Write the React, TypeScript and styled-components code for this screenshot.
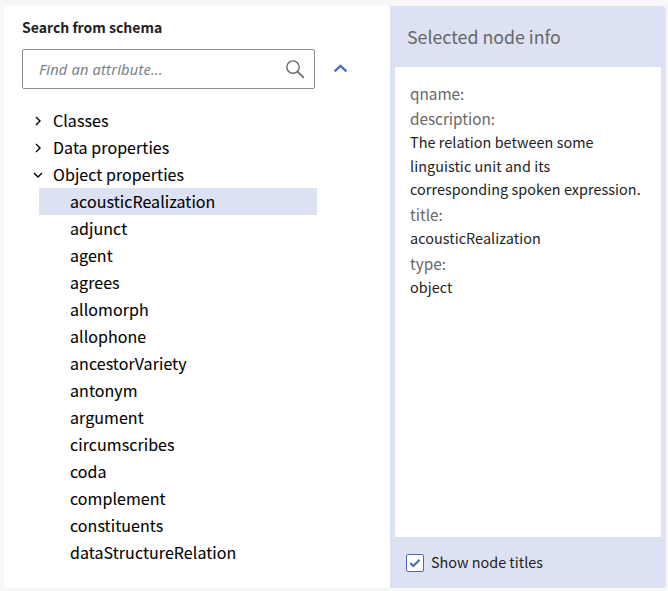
import React, { useState } from "react";
import styled, { createGlobalStyle } from "styled-components";

const Global = createGlobalStyle`
  * { box-sizing: border-box; }
  body {
    margin: 0;
    background: #f7f7f7;
    font-family: "Noto Sans CJK JP", "Noto Sans", sans-serif;
    color: #222;
  }
`;

const Page = styled.main`
  height: 591px;
  padding: 6px 2px 3px 4px;
  overflow: hidden;
`;

const Card = styled.section`
  display: flex;
  height: 582px;
  background: #fff;
  border-radius: 4px;
  overflow: hidden;
`;

const SearchPanel = styled.div`
  flex: 0 0 386px;
  padding: 10px 0 0 18px;
`;

const Label = styled.label`
  display: block;
  height: 33px;
  line-height: 22px;
  font-size: 14px;
  font-weight: 600;
  color: #222;
`;

const SearchRow = styled.div`
  display: flex;
  align-items: center;
  gap: 18px;
`;

const SearchBox = styled.div`
  display: flex;
  align-items: center;
  width: 293px;
  height: 40px;
  padding: 0 9px 0 16px;
  border: 1px solid #878d93;
  border-radius: 2px;
  color: #63686d;
`;

const SearchInput = styled.input`
  flex: 1;
  min-width: 0;
  height: 36px;
  padding: 0;
  border: 0;
  outline: 0;
  background: transparent;
  font: italic 14.6px "Noto Sans", sans-serif;
  letter-spacing: 0.2px;
  &::placeholder {
    color: #7c8187;
    opacity: 1;
  }
`;

const CollapseButton = styled.button`
  display: flex;
  padding: 0;
  border: 0;
  background: none;
  color: #4a6fcd;
`;

const Tree = styled.ul`
  margin: 18px 0 0 17px;
  padding: 0;
  width: 278px;
  list-style: none;
`;

const TreeRow = styled.li<{ $depth: number; $selected?: boolean }>`
  display: flex;
  align-items: center;
  height: 27px;
  padding-left: ${(p) => (p.$depth ? 31 : 0)}px;
  background: ${(p) => (p.$selected ? "#dde2f3" : "transparent")};
  color: #000;
  font-size: 16px;
  letter-spacing: 0.06px;
  line-height: 27px;
  white-space: nowrap;
  -webkit-text-stroke: 0.08px #000;
`;

const Toggle = styled.svg`
  flex: none;
  width: 10px;
  height: 10px;
  margin: 0 10px 0 -6px;
`;

const InfoPanel = styled.aside`
  display: flex;
  flex-direction: column;
  flex: 1;
  padding: 0 5px;
  background: #dde2f3;
`;

const InfoTitle = styled.h2`
  margin: 0;
  height: 61px;
  padding-left: 12px;
  font-size: 17.75px;
  font-weight: 400;
  line-height: 61px;
  color: #676767;
`;

const InfoBody = styled.dl`
  height: 470px;
  margin: 0;
  padding: 14px 10px 0 15px;
  background: #fff;
`;

const Term = styled.dt`
  height: 25px;
  line-height: 25px;
  font-size: 15.3px;
  color: #676767;
`;

const Detail = styled.dd`
  margin: -1px 0 1.6px;
  font-size: 14.4px;
  letter-spacing: 0.05px;
  line-height: 23.5px;
  white-space: pre-line;
  color: #222;
`;

const InfoFooter = styled.label`
  display: flex;
  align-items: center;
  height: 51px;
  padding-left: 11px;
  gap: 7px;
  font-size: 14.4px;
  color: #222;
`;

const FooterText = styled.span`
  line-height: 20px;
  padding-bottom: 1px;
`;

const HiddenCheckbox = styled.input`
  position: absolute;
  opacity: 0;
  pointer-events: none;
`;

const CheckMark = styled.span`
  display: flex;
  align-items: center;
  justify-content: center;
  width: 18px;
  height: 18px;
  border: 1px solid #4a67b8;
  border-radius: 2px;
  background: #fff;
`;

const groups = [
  { title: "Classes", open: false, items: [] as string[] },
  { title: "Data properties", open: false, items: [] as string[] },
  {
    title: "Object properties",
    open: true,
    items: [
      "acousticRealization", "adjunct", "agent", "agrees", "allomorph",
      "allophone", "ancestorVariety", "antonym", "argument",
      "circumscribes", "coda", "complement", "constituents",
      "dataStructureRelation",
    ],
  },
];

const details = [
  { term: "qname:", value: "" },
  {
    term: "description:",
    value: "The relation between some\nlinguistic unit and its\ncorresponding spoken expression.",
  },
  { term: "title:", value: "acousticRealization" },
  { term: "type:", value: "object" },
];

export default function App() {
  const [selected, setSelected] = useState("acousticRealization");
  const [showTitles, setShowTitles] = useState(true);

  return (
    <>
      <Global />
      <Page>
        <Card>
          <SearchPanel>
            <Label htmlFor="attribute">Search from schema</Label>
            <SearchRow>
              <SearchBox>
                <SearchInput id="attribute" placeholder="Find an attribute..." />
                <svg width="19" height="19" viewBox="0 0 19 19" fill="none" stroke="currentColor" strokeLinecap="round">
                  <circle cx="7" cy="7.1" r="6.2" strokeWidth="1.4" />
                  <path d="M11.5 11.6 17.4 17.4" strokeWidth="1.6" />
                </svg>
              </SearchBox>
              <CollapseButton aria-label="Collapse">
                <svg width="15" height="10" viewBox="0 0 15 10" fill="none" stroke="currentColor" strokeWidth="2.5">
                  <path d="M1.6 7.3 7.5 1.9 13.4 7.3" />
                </svg>
              </CollapseButton>
            </SearchRow>
            <Tree>
              {groups.map((group) => (
                <React.Fragment key={group.title}>
                  <TreeRow $depth={0}>
                    <Toggle viewBox="0 0 10 10" fill="none" stroke="currentColor" strokeWidth="1.4">
                      <path d={group.open ? "M1 3.1 5 7.1 9 3.1" : "M3 1 7 5 3 9"} />
                    </Toggle>
                    {group.title}
                  </TreeRow>
                  {group.items.map((item) => (
                    <TreeRow key={item} $depth={1} $selected={item === selected} onClick={() => setSelected(item)}>
                      {item}
                    </TreeRow>
                  ))}
                </React.Fragment>
              ))}
            </Tree>
          </SearchPanel>
          <InfoPanel>
            <InfoTitle>Selected node info</InfoTitle>
            <InfoBody>
              {details.map(({ term, value }) => (
                <React.Fragment key={term}>
                  <Term>{term}</Term>
                  {value && <Detail>{value}</Detail>}
                </React.Fragment>
              ))}
            </InfoBody>
            <InfoFooter>
              <HiddenCheckbox type="checkbox" checked={showTitles} onChange={() => setShowTitles(!showTitles)} />
              <CheckMark>
                {showTitles && (
                  <svg width="12" height="10" viewBox="0 0 12 10" fill="none" stroke="#4a67b8" strokeWidth="2">
                    <path d="M1.3 5 4.3 8 10.6 1.7" />
                  </svg>
                )}
              </CheckMark>
              <FooterText>Show node titles</FooterText>
            </InfoFooter>
          </InfoPanel>
        </Card>
      </Page>
    </>
  );
}
